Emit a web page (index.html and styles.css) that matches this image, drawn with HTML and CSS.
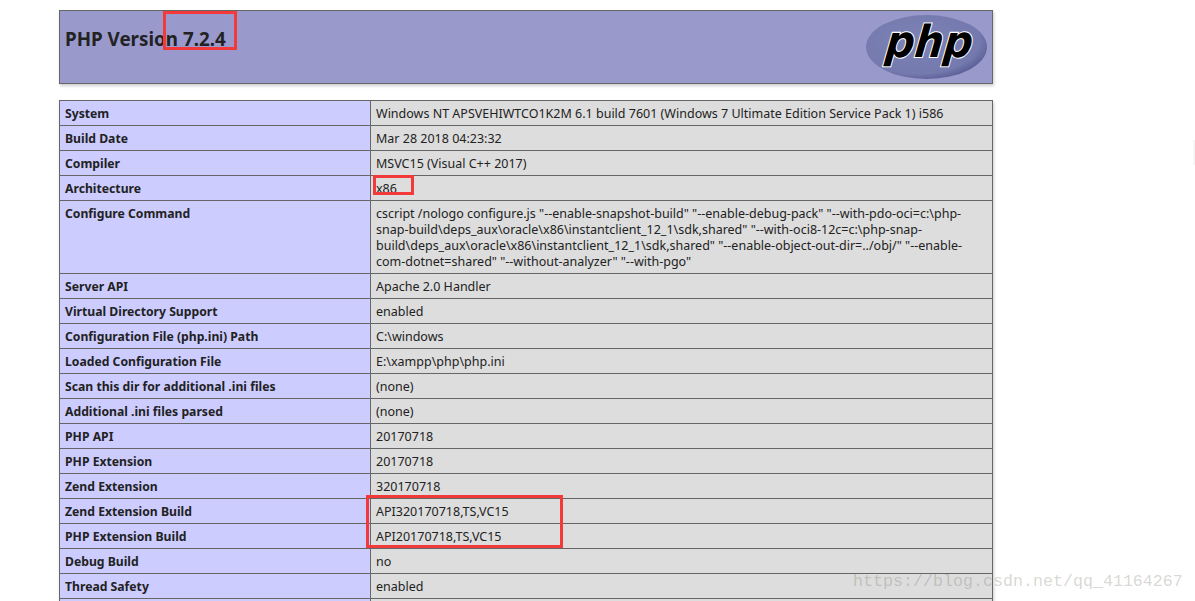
FILE: index.html
```html
<!DOCTYPE html>
<html lang="en">
<head>
<meta charset="utf-8">
<title>phpinfo()</title>
<link rel="stylesheet" href="styles.css">
</head>
<body>
<main class="center">
  <header class="banner">
    <h1 class="title">PHP Version 7.2.4</h1>
    <svg class="logo" width="122" height="66" viewBox="0 0 122 66" role="img" aria-label="PHP logo">
      <defs>
        <radialGradient id="oval" cx="0.42" cy="0.4" r="0.65">
          <stop offset="0" stop-color="#7e84b6"/>
          <stop offset="0.8" stop-color="#7479ae"/>
          <stop offset="1" stop-color="#565b92"/>
        </radialGradient>
      </defs>
      <ellipse cx="61.5" cy="32" rx="60.5" ry="32" fill="url(#oval)"/>
      <text class="logo-text" x="63" y="42" transform="translate(4.4 0) skewX(-6)" text-anchor="middle" textLength="87" lengthAdjust="spacingAndGlyphs">php</text>
    </svg>
  </header>
  <table class="info">
    <tbody>
      <tr><th>System</th><td>Windows NT APSVEHIWTCO1K2M 6.1 build 7601 (Windows 7 Ultimate Edition Service Pack 1) i586</td></tr>
      <tr><th>Build Date</th><td>Mar 28 2018 04:23:32</td></tr>
      <tr><th>Compiler</th><td>MSVC15 (Visual C++ 2017)</td></tr>
      <tr><th>Architecture</th><td>x86</td></tr>
      <tr><th>Configure Command</th><td>cscript /nologo configure.js "--enable-snapshot-build" "--enable-debug-pack" "--with-pdo-oci=c:\php-snap-build\deps_aux\oracle\x86\instantclient_12_1\sdk,shared" "--with-oci8-12c=c:\php-snap-build\deps_aux\oracle\x86\instantclient_12_1\sdk,shared" "--enable-object-out-dir=../obj/" "--enable-com-dotnet=shared" "--without-analyzer" "--with-pgo"</td></tr>
      <tr><th>Server API</th><td>Apache 2.0 Handler</td></tr>
      <tr><th>Virtual Directory Support</th><td>enabled</td></tr>
      <tr><th>Configuration File (php.ini) Path</th><td>C:\windows</td></tr>
      <tr><th>Loaded Configuration File</th><td>E:\xampp\php\php.ini</td></tr>
      <tr><th>Scan this dir for additional .ini files</th><td>(none)</td></tr>
      <tr><th>Additional .ini files parsed</th><td>(none)</td></tr>
      <tr><th>PHP API</th><td>20170718</td></tr>
      <tr><th>PHP Extension</th><td>20170718</td></tr>
      <tr><th>Zend Extension</th><td>320170718</td></tr>
      <tr><th>Zend Extension Build</th><td>API320170718,TS,VC15</td></tr>
      <tr><th>PHP Extension Build</th><td>API20170718,TS,VC15</td></tr>
      <tr><th>Debug Build</th><td>no</td></tr>
      <tr><th>Thread Safety</th><td>enabled</td></tr>
      <tr class="next"><th></th><td></td></tr>
    </tbody>
  </table>
</main>
<div class="mark mark-version"></div>
<div class="mark mark-arch"></div>
<div class="mark mark-build"></div>
<div class="edge"></div>
<div class="watermark">https://blog.csdn.net/qq_41164267</div>
</body>
</html>
```
FILE: styles.css
```css
html, body {
  margin: 0;
  height: 601px;
  overflow: hidden;
  background: #fff;
}
body {
  position: relative;
  color: #222;
  font-family: "Noto Sans", "Open Sans", sans-serif;
  font-size: 12.5px;
}
.center {
  width: 934px;
  margin-left: 59px;
  padding-top: 10px;
}
.banner {
  box-sizing: border-box;
  height: 74px;
  display: flex;
  justify-content: space-between;
  align-items: flex-start;
  padding: 4px 5px 0;
  background: #99c;
  border: 1px solid #666;
  box-shadow: 1px 2px 3px #ccc;
}
.title {
  margin: 12px 0 0;
  font-size: 18.8px;
  line-height: 25px;
  font-weight: 700;
}
.logo { display: block; }
.logo-text {
  font-family: "DejaVu Sans", sans-serif;
  font-size: 44px;
  font-weight: 700;
  font-style: italic;
  fill: #000;
  stroke: #fff;
  stroke-width: 2.2px;
  paint-order: stroke;
}
.info {
  width: 934px;
  margin-top: 16px;
  border-collapse: collapse;
  table-layout: fixed;
  box-shadow: 1px 2px 3px #ccc;
}
.info th, .info td {
  box-sizing: border-box;
  height: 25px;
  padding: 5px 5px 3px;
  border: 1px solid #666;
  line-height: 16px;
  text-align: left;
  vertical-align: top;
  font-size: 12.5px;
}
.info th {
  width: 311px;
  background: #ccf;
  font-size: 12.2px;
  font-weight: 700;
}
.info td {
  background: #ddd;
  overflow-wrap: anywhere;
}
.mark {
  position: absolute;
  box-sizing: border-box;
  border: 3px solid #f23a3a;
}
.mark-version { left: 163px; top: 11px; width: 74px; height: 39px; }
.mark-arch { left: 373px; top: 175px; width: 41px; height: 20px; }
.mark-build { left: 366px; top: 495px; width: 197px; height: 53px; }
.edge {
  position: absolute;
  right: 0;
  top: 140px;
  width: 2px;
  height: 25px;
  background: #f6f6f6;
}
.watermark {
  position: absolute;
  left: 853px;
  top: 572px;
  font-family: "Liberation Mono", monospace;
  font-size: 16.67px;
  line-height: 20px;
  color: rgba(120, 120, 110, 0.3);
  white-space: nowrap;
}
```
